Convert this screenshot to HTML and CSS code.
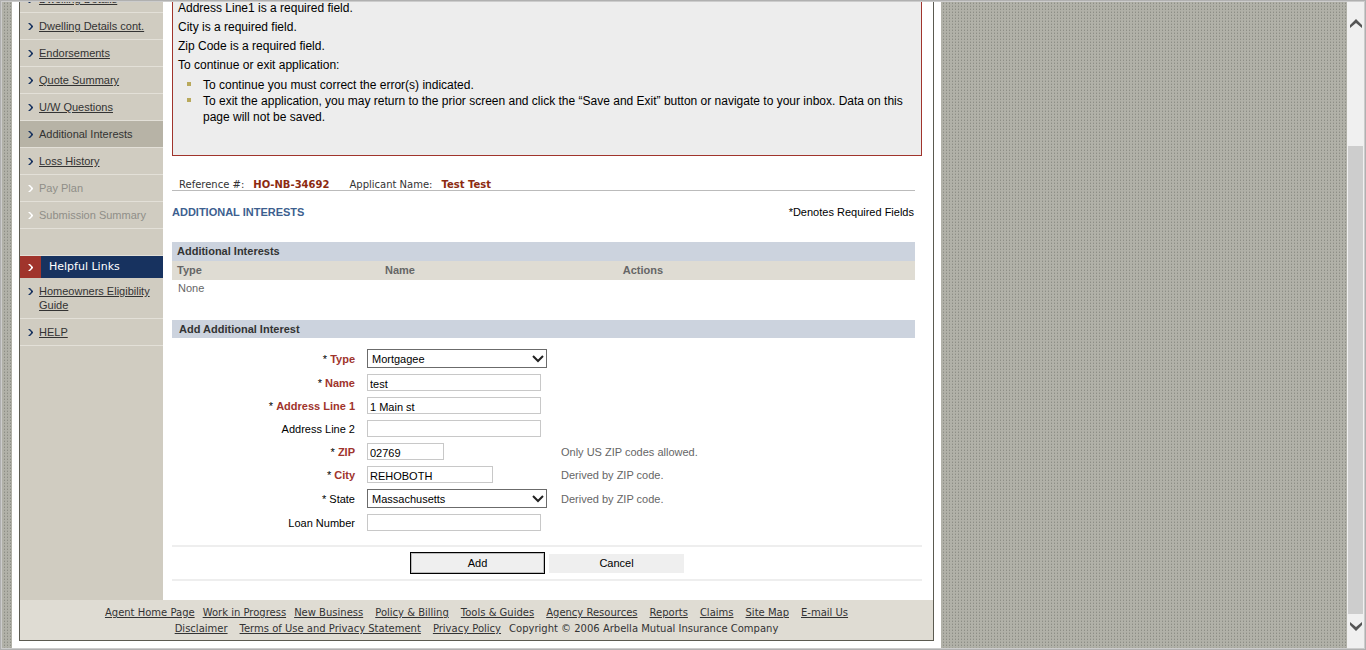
FILE: index.html
```html
<!DOCTYPE html>
<html lang="en">
<head>
<meta charset="utf-8">
<title>Additional Interests</title>
<link rel="stylesheet" href="styles.css">
</head>
<body>
<svg class="defs" aria-hidden="true"><symbol id="chev" viewBox="0 0 5 7"><path d="M0 0h2l3 3v1l-3 3H0l3-3V3z" fill="currentColor"/></symbol></svg>
<div class="window">
<div class="viewport">
<div class="sheet">
<div class="frame">
<div class="columns">
<nav class="sidebar">
<ul class="menu cut">
<li><svg class="chev"><use href="#chev"/></svg><a href="#">Dwelling Details</a></li>
<li><svg class="chev"><use href="#chev"/></svg><a href="#">Dwelling Details cont.</a></li>
<li><svg class="chev"><use href="#chev"/></svg><a href="#">Endorsements</a></li>
<li><svg class="chev"><use href="#chev"/></svg><a href="#">Quote Summary</a></li>
<li><svg class="chev"><use href="#chev"/></svg><a href="#">U/W Questions</a></li>
<li class="current"><svg class="chev"><use href="#chev"/></svg><span>Additional Interests</span></li>
<li><svg class="chev"><use href="#chev"/></svg><a href="#">Loss History</a></li>
<li class="off"><svg class="chev"><use href="#chev"/></svg><span>Pay Plan</span></li>
<li class="off"><svg class="chev"><use href="#chev"/></svg><span>Submission Summary</span></li>
<li class="blank"></li>
</ul>
<h2 class="links-title"><span class="mark"><svg class="chev"><use href="#chev"/></svg></span>Helpful Links</h2>
<ul class="menu">
<li><svg class="chev"><use href="#chev"/></svg><a href="#">Homeowners Eligibility Guide</a></li>
<li><svg class="chev"><use href="#chev"/></svg><a href="#">HELP</a></li>
</ul>
</nav>
<main class="main">
<section class="errors">
<p>Address Line1 is a required field.</p>
<p>City is a required field.</p>
<p>Zip Code is a required field.</p>
<p>To continue or exit application:</p>
<ul>
<li>To continue you must correct the error(s) indicated.</li>
<li>To exit the application, you may return to the prior screen and click the “Save and Exit” button or navigate to your inbox. Data on this page will not be saved.</li>
</ul>
</section>
<div class="body">
<div class="reference"><span>Reference #:</span><b>HO-NB-34692</b><span class="applicant">Applicant Name:</span><b>Test Test</b></div>
<div class="heading"><h1>ADDITIONAL INTERESTS</h1><span>*Denotes Required Fields</span></div>
<table class="interests">
<caption>Additional Interests</caption>
<thead><tr><th class="c-type">Type</th><th class="c-name">Name</th><th>Actions</th></tr></thead>
<tbody><tr><td colspan="3">None</td></tr></tbody>
</table>
<h2 class="bar">Add Additional Interest</h2>
</div>
<form class="form">
<div class="fields">
<label for="type">* <b>Type</b></label>
<span class="pick"><select id="type"><option>Mortgagee</option></select><svg viewBox="0 0 12 8"><path d="M1 1l5 5 5-5" /></svg></span><span></span>
<label for="name">* <b>Name</b></label><input id="name" type="text" value="test"><span></span>
<label for="a1">* <b>Address Line 1</b></label><input id="a1" type="text" value="1 Main st"><span></span>
<label for="a2">Address Line 2</label><input id="a2" type="text"><span></span>
<label for="zip">* <b>ZIP</b></label><input class="zip" id="zip" type="text" value="02769"><span class="hint">Only US ZIP codes allowed.</span>
<label for="city">* <b>City</b></label><input class="city" id="city" type="text" value="REHOBOTH"><span class="hint">Derived by ZIP code.</span>
<label for="state">* State</label>
<span class="pick"><select id="state"><option>Massachusetts</option></select><svg viewBox="0 0 12 8"><path d="M1 1l5 5 5-5" /></svg></span><span class="hint">Derived by ZIP code.</span>
<label for="loan">Loan Number</label><input id="loan" type="text"><span></span>
</div>
<div class="actions"><button class="primary" type="button">Add</button><button type="button">Cancel</button></div>
</form>
</main>
</div>
<footer class="footer">
<div class="row"><a href="#">Agent Home Page</a><a class="near" href="#">Work in Progress</a><a class="near" href="#">New Business</a><a href="#">Policy &amp; Billing</a><a href="#">Tools &amp; Guides</a><a href="#">Agency Resources</a><a href="#">Reports</a><a href="#">Claims</a><a href="#">Site Map</a><a href="#">E-mail Us</a></div>
<div class="row"><a href="#">Disclaimer</a><a href="#">Terms of Use and Privacy Statement</a><a href="#">Privacy Policy</a><span class="near">Copyright © 2006 Arbella Mutual Insurance Company</span></div>
</footer>
</div>
</div>
</div>
<div class="scrollbar" aria-hidden="true">
<svg class="arrow" viewBox="0 0 12 9"><path d="M6 0l6 6v3L6 4 0 9V6z"/></svg>
<div class="track"><div class="thumb"></div></div>
<svg class="arrow" viewBox="0 0 12 9"><path d="M6 9l6-6V0L6 5 0 0v3z"/></svg>
</div>
</div>
</body>
</html>
```

FILE: styles.css
```css
* { box-sizing: border-box; }
body { margin: 0; font: 11px/14px "Liberation Sans", Arial, sans-serif; color: #000; }
h1, h2, p, ul { margin: 0; padding: 0; font-size: 11px; }
ul { list-style: none; }
.defs { position: absolute; width: 0; height: 0; }

.window { display: flex; height: 100vh; border: 1px solid #b0b0b0; box-shadow: inset 0 0 0 1px #ccc; padding: 1px; }
.viewport {
  flex: 1; min-width: 0; overflow: hidden; padding-left: 10px;
  background-color: #b1b1a8;
  background-image: linear-gradient(90deg, #b1b1a8 2px, transparent 2px), linear-gradient(#a3a39a 1px, #8d8e86 1px, #8d8e86 2px, #b1b1a8 2px);
  background-size: 3px 3px;
}
.sheet { max-width: 929px; min-height: 100%; padding: 0 7px 7px; background: #fff; }
.frame { border: 1px solid #5b5a50; border-top: 0; }
.columns { display: flex; }

.sidebar { flex: none; width: 143px; background: #d0ccc1; overflow: hidden; }
.cut { margin-top: -16px; }
.menu li { display: flex; gap: 6px; padding: 6px 8px; min-height: 27px; border-bottom: 1px solid #e3e0d8; color: #333; }
.menu a, .footer a { color: #333; text-decoration: underline; text-underline-offset: 1px; }
.chev { flex: none; width: 5px; height: 7px; margin-top: 4px; color: #17325f; }
.menu .current { background: #b7b3a6; }
.menu .off { color: #8f8e88; }
.off .chev, .mark .chev { color: #fff; }
.links-title { display: flex; gap: 8px; background: #17325f; color: #fff; font: 11px/22px "DejaVu Sans", Verdana, sans-serif; }
.mark { width: 21px; padding-left: 8px; background: #a0342c; display: flex; align-items: center; }
.mark .chev { margin-top: 0; }

.main { flex: 1; min-width: 0; padding: 0 11px 19px 9px; }
.errors { height: 154px; padding: 0 5px; border: 1px solid #a0342c; border-top: 0; background: #ededed; font-size: 12px; line-height: 16px; overflow: hidden; }
.errors p { font-size: 12px; line-height: 19px; }
.errors p:first-child { margin-top: -3px; }
.errors ul { font-size: 12px; padding: 2px 10px 0 9px; }
.errors li { position: relative; padding-left: 16px; }
.errors li::before { content: ""; position: absolute; left: 0; top: 5px; width: 4px; height: 4px; background: #b9a95c; }

.body { padding-right: 7px; }
.reference { display: flex; gap: 9px; margin-top: 24px; padding-left: 7px; border-bottom: 1px solid #bbb; font: 10px/10px "DejaVu Sans", Verdana, sans-serif; color: #333; }
.reference b { color: #8c2a10; }
.applicant { margin-left: 11px; }
.heading { display: flex; justify-content: space-between; padding: 14px 1px 23px 0; }
.heading h1 { color: #3d5f8f; }
.interests { width: 100%; border-collapse: collapse; text-align: left; color: #666; table-layout: fixed; }
.interests caption { padding-left: 5px; background: #ccd3de; color: #333; font-weight: bold; line-height: 19px; text-align: left; }
.interests th { padding: 0 0 0 5px; background: #dfdcd3; line-height: 19px; }
.interests td { padding: 0 6px; line-height: 16px; }
.c-type { width: 28%; }
.c-name { width: 32%; }
.bar { margin-top: 24px; padding-left: 7px; background: #ccd3de; color: #333; line-height: 18px; }

.fields { display: grid; grid-template-columns: 183px 180px 1fr; column-gap: 12px; row-gap: 6px; align-items: center; padding: 11px 0 14px; }
.fields label { text-align: right; line-height: 16px; }
.fields label b { color: #a0342c; }
input { width: 174px; height: 17px; margin: 0; padding: 2px 2px 0; border: 1px solid #c8c8c8; background: #fff; font: inherit; color: #000; }
.zip { width: 77px; }
.city { width: 126px; }
.pick { position: relative; display: block; height: 19px; }
select { display: block; width: 100%; height: 19px; padding: 0 4px; appearance: none; border: 1px solid #6b6b6b; border-radius: 0; background: #fff; font: inherit; color: #000; }
.pick svg { position: absolute; right: 3px; top: 6px; width: 12px; height: 8px; fill: none; stroke: #222; stroke-width: 2; pointer-events: none; }
.hint { color: #666; padding-left: 2px; }
.actions { display: flex; justify-content: center; align-items: center; gap: 4px; height: 36px; border: solid #eee; border-width: 2px 0; }
.actions button { width: 135px; height: 19px; padding: 0 0 1px; border: 0; background: #efefef; font: inherit; color: #000; }
.actions .primary { height: 22px; border: 1px solid #000; box-shadow: inset 0 0 0 1px #bbb; }

.footer { padding: 5px 0 3px; background: #dfdcd3; font: 10px/16px "DejaVu Sans", Verdana, sans-serif; color: #333; }
.row { display: flex; justify-content: center; gap: 8px; white-space: nowrap; }
.row > * + *:not(.near) { margin-left: 4px; }

.scrollbar { flex: none; width: 17px; display: flex; flex-direction: column; align-items: center; gap: 8px; padding: 17px 1px; background: #f0f0f0; }
.arrow { flex: none; width: 12px; height: 9px; fill: #555; }
.track { flex: 1; align-self: stretch; display: flex; flex-direction: column; justify-content: flex-end; }
.thumb { height: 81%; background: #cdcdcd; }
```
